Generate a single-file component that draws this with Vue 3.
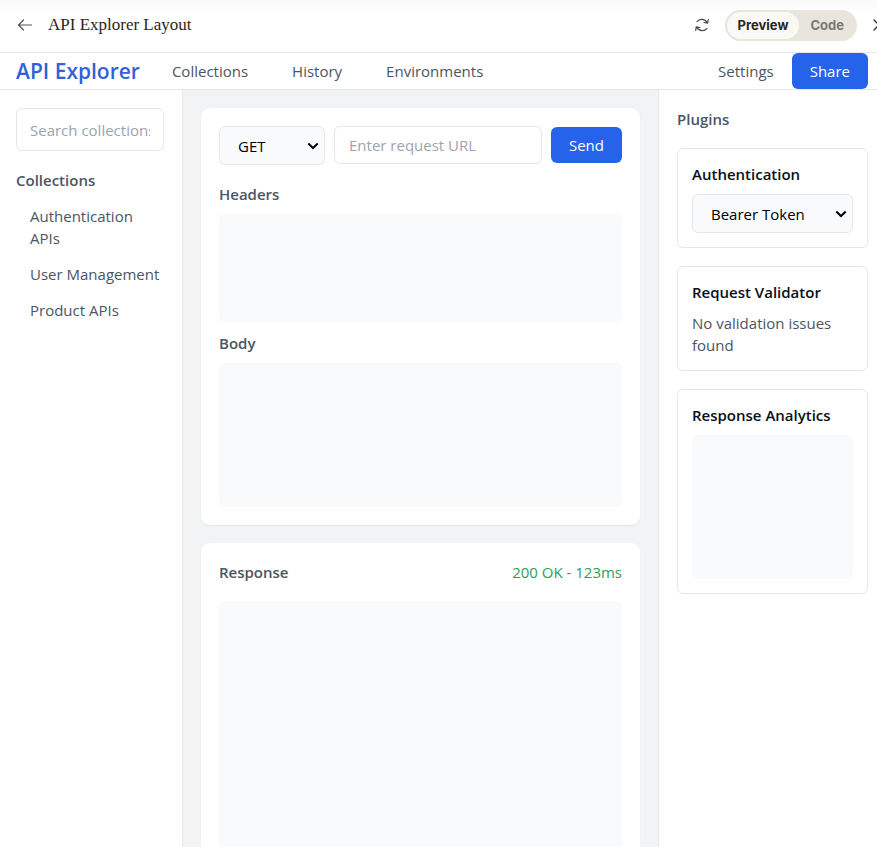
<script setup>
import { ref } from 'vue'

const method = ref('GET')
const auth = ref('Bearer Token')
const url = ref('')
const search = ref('')
const view = ref('Preview')
const navLinks = ['Collections', 'History', 'Environments']
const collections = ['Authentication APIs', 'User Management', 'Product APIs']
</script>

<template>
  <div class="page">
    <div class="toolbar">
      <button class="icon-btn" type="button" aria-label="Back">
        <svg width="16" height="16" viewBox="0 0 16 16" fill="none" stroke="#55544f" stroke-width="1.2" stroke-linecap="round" stroke-linejoin="round">
          <path d="M14.5 8H1.5M6.5 3L1.5 8l5 5" />
        </svg>
      </button>
      <h1 class="doc-title">API Explorer Layout</h1>
      <button class="icon-btn" type="button" aria-label="Refresh">
        <svg width="16" height="16" viewBox="0 0 16 16" fill="none" stroke="#4b4a45" stroke-width="1.2" stroke-linecap="round" stroke-linejoin="round">
          <path d="M3 4.6C5.6 1.4 10.6 1.4 13.2 5.6M14.3 2.6L13.6 6.1L10 5.5M13 11.4C10.4 14.6 5.4 14.6 2.8 10.4M1.7 13.4L2.2 9.9L5.9 10.5" />
        </svg>
      </button>
      <div class="switch">
        <button
          v-for="name in ['Preview', 'Code']"
          :key="name"
          type="button"
          :class="{ active: view === name }"
          @click="view = name"
        >{{ name }}</button>
      </div>
      <button class="icon-btn close" type="button" aria-label="Close">
        <svg width="14" height="14" viewBox="0 0 14 14" fill="none" stroke="#33322e" stroke-width="1.3" stroke-linecap="round">
          <path d="M1 2l10 10M11 2l-10 10" />
        </svg>
      </button>
    </div>

    <header class="topbar">
      <a class="brand" href="#">API Explorer</a>
      <nav class="nav">
        <a v-for="link in navLinks" :key="link" href="#">{{ link }}</a>
      </nav>
      <button class="text-btn" type="button">Settings</button>
      <button class="primary" type="button">Share</button>
    </header>

    <div class="columns">
      <aside class="sidebar">
        <input v-model="search" class="search" type="text" placeholder="Search collections..." aria-label="Search collections" />
        <h2>Collections</h2>
        <ul>
          <li v-for="item in collections" :key="item"><a href="#">{{ item }}</a></li>
        </ul>
      </aside>

      <main class="main">
        <section class="card">
          <div class="request">
            <div class="select method">
              <select v-model="method" aria-label="Method">
                <option>GET</option>
                <option>POST</option>
                <option>PUT</option>
                <option>DELETE</option>
              </select>
              <svg width="12" height="8" viewBox="0 0 12 8" fill="none" stroke="#000" stroke-width="2"><path d="M1.3 1.5L6 6l4.700-4.500" /></svg>
            </div>
            <input v-model="url" class="url" type="text" placeholder="Enter request URL" aria-label="Request URL" />
            <button class="primary" type="button">Send</button>
          </div>
          <h2>Headers</h2>
          <div class="well headers"></div>
          <h2>Body</h2>
          <div class="well body"></div>
        </section>

        <section class="card">
          <div class="response-head">
            <h2>Response</h2>
            <span class="status">200 OK - 123ms</span>
          </div>
          <div class="well result"></div>
        </section>
      </main>

      <aside class="plugins">
        <h2>Plugins</h2>
        <section class="plugin">
          <h3><label for="auth">Authentication</label></h3>
          <div class="select">
            <select id="auth" v-model="auth">
              <option>Bearer Token</option>
              <option>API Key</option>
              <option>Basic Auth</option>
            </select>
            <svg width="12" height="8" viewBox="0 0 12 8" fill="none" stroke="#000" stroke-width="2"><path d="M1.300 1.500L6 6l4.700-4.500" /></svg>
          </div>
        </section>
        <section class="plugin">
          <h3>Request Validator</h3>
          <p>No validation issues found</p>
        </section>
        <section class="plugin">
          <h3>Response Analytics</h3>
          <div class="well chart"></div>
        </section>
      </aside>
    </div>
  </div>
</template>

<style>
body {
  margin: 0;
  overflow: hidden;
}
</style>

<style scoped>
.page,
.page * {
  box-sizing: border-box;
}
.page {
  display: flex;
  flex-direction: column;
  height: 100vh;
  overflow: hidden;
  background: #fff;
  color: #4b5563;
  font-family: "Segoe UI", "Open Sans", "Noto Sans", sans-serif;
  font-size: 15px;
  line-height: 22px;
}
h1,
h2,
h3,
p,
ul {
  margin: 0;
  padding: 0;
}
button,
input,
select {
  font: inherit;
}
button {
  border: 0;
  background: none;
  padding: 0;
  cursor: pointer;
}
a {
  color: inherit;
  text-decoration: none;
}
.toolbar {
  display: flex;
  flex: none;
  align-items: center;
  height: 53px;
  padding: 0 0 2px 17px;
  overflow: hidden;
  border-bottom: 1px solid #e8e8e8;
  background: linear-gradient(#fafafa, #fff 16px);
}
.icon-btn {
  display: flex;
  flex: none;
}
.doc-title {
  flex: 1;
  margin-left: 15px;
  color: #29261b;
  font-family: "Liberation Serif", serif;
  font-size: 17px;
  font-weight: 400;
  line-height: 24px;
  white-space: nowrap;
}
.switch {
  display: flex;
  flex: none;
  margin-left: 15px;
  padding: 2px;
  border-radius: 16px;
  background: #e8e5dc;
  font-family: Inter, "Liberation Sans", sans-serif;
  font-size: 13px;
  line-height: 27px;
}
.switch button {
  padding: 0 11px;
  border-radius: 14px;
  color: #7b7974;
  font-weight: 700;
}
.switch .active {
  background: #faf9f5;
  color: #29261b;
}
.close {
  width: 4px;
  margin-left: 16px;
  overflow: visible;
}
.close svg {
  flex: none;
}
.topbar {
  display: flex;
  flex: none;
  align-items: center;
  padding: 0 9px 0 16px;
  border-bottom: 1px solid #e5e7eb;
}
.brand {
  color: #2f62d9;
  font-size: 21px;
  font-weight: 600;
  white-space: nowrap;
}
.nav {
  display: flex;
  flex: 1;
  gap: 44px;
  margin-left: 32px;
}
.text-btn {
  margin-right: 18px;
  color: #4b5563;
}
.primary {
  flex: none;
  padding: 7px 18px;
  border-radius: 6px;
  background: #2563eb;
  color: #fff;
}
.columns {
  display: grid;
  flex: 1;
  grid-template-columns: 183px minmax(0, 1fr) 219px;
  min-height: 0;
}
h2,
h3 {
  font-size: 15px;
  font-weight: 600;
}
.sidebar {
  padding: 18px 18px 18px 16px;
  border-right: 1px solid #e5e7eb;
}
input {
  min-width: 0;
  border: 1px solid #e5e7eb;
  border-radius: 6px;
  background: #fff;
  color: #111827;
}
input::placeholder {
  color: #9ca3af;
  opacity: 1;
}
.search {
  display: block;
  width: 100%;
  height: 43px;
  margin-bottom: 18px;
  padding: 0 13px;
}
.sidebar ul {
  padding: 7px 0 0 14px;
  list-style: none;
}
.sidebar li {
  padding: 7px 0;
  margin-right: -18px;
}
.sidebar li a {
  display: block;
  max-width: 130px;
}
.main {
  display: flex;
  flex-direction: column;
  gap: 18px;
  min-height: 0;
  padding: 18px 18px 0;
  overflow: hidden;
  background: #f1f3f5;
}
.card {
  flex: none;
  padding: 18px;
  border-radius: 9px;
  background: #fff;
  box-shadow: 0 1px 2px rgba(0, 0, 0, 0.06);
}
.request {
  display: flex;
  align-items: flex-start;
  gap: 9px;
  margin-bottom: 18px;
}
.request .primary {
  margin-top: 1px;
}
.select {
  position: relative;
}
.select svg {
  position: absolute;
  top: 16px;
  right: 6px;
  pointer-events: none;
}
select {
  display: block;
  width: 100%;
  height: 39px;
  padding: 0 24px 0 18px;
  appearance: none;
  border: 1px solid #e5e7eb;
  border-radius: 6px;
  background: #f9fafb;
  color: #000;
}
.method {
  flex: none;
  width: 106px;
}
.url {
  flex: 1;
  height: 38px;
  padding: 0 14px;
}
.well {
  border-radius: 6px;
  background: #f9fafb;
}
.card .well {
  margin-top: 9px;
}
.headers {
  height: 108px;
  margin-bottom: 10px;
}
.body {
  height: 144px;
}
.response-head {
  display: flex;
  justify-content: space-between;
}
.status {
  color: #2b9e57;
}
.card .result {
  height: 320px;
  margin-top: 18px;
}
.plugins {
  display: flex;
  flex-direction: column;
  gap: 18px;
  padding: 18px 9px 18px 18px;
  border-left: 1px solid #e5e7eb;
}
.plugin {
  padding: 14px;
  border: 1px solid #e5e7eb;
  border-radius: 6px;
}
.plugin h3 {
  margin-bottom: 9px;
  color: #0b0f19;
  white-space: nowrap;
}
.chart {
  height: 144px;
}
</style>
